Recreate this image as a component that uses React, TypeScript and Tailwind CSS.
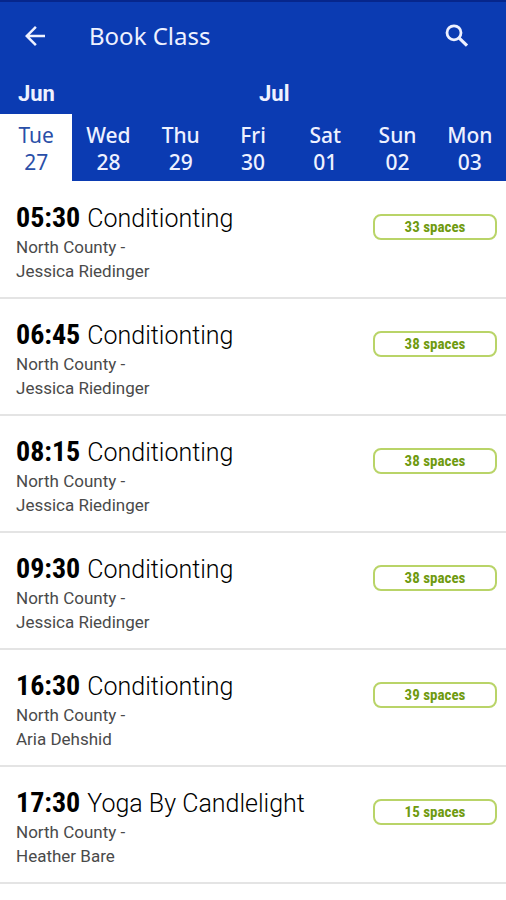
import { useState } from 'react';
import { MdArrowBack } from 'react-icons/md';

interface GymClass {
    time: string;
    title: string;
    club: string;
    instructor: string;
    spaces: number;
}

const days = [
    { name: 'Tue', date: '27' },
    { name: 'Wed', date: '28' },
    { name: 'Thu', date: '29' },
    { name: 'Fri', date: '30' },
    { name: 'Sat', date: '01' },
    { name: 'Sun', date: '02' },
    { name: 'Mon', date: '03' },
];

const classes: GymClass[] = [
    { time: '05:30', title: 'Conditionting', club: 'North County', instructor: 'Jessica Riedinger', spaces: 33 },
    { time: '06:45', title: 'Conditionting', club: 'North County', instructor: 'Jessica Riedinger', spaces: 38 },
    { time: '08:15', title: 'Conditionting', club: 'North County', instructor: 'Jessica Riedinger', spaces: 38 },
    { time: '09:30', title: 'Conditionting', club: 'North County', instructor: 'Jessica Riedinger', spaces: 38 },
    { time: '16:30', title: 'Conditionting', club: 'North County', instructor: 'Aria Dehshid', spaces: 39 },
    { time: '17:30', title: 'Yoga By Candlelight', club: 'North County', instructor: 'Heather Bare', spaces: 15 },
];

function SearchIcon() {
    return (
        <svg viewBox="0 0 28 28" className="size-7" fill="none" stroke="currentColor" strokeWidth="2.8">
            <circle cx="12" cy="10.8" r="7" />
            <path d="M17 15.8L25 23.6" strokeWidth="3.2" />
        </svg>
    );
}

function Header() {
    return (
        <div className="flex items-center border-t-2 border-[#06268c] pt-3 pl-5 pr-9">
            <button type="button" aria-label="Back" className="text-[30px]">
                <MdArrowBack />
            </button>
            <h1 className="ml-[39px] flex-1 text-2xl leading-11">Book Class</h1>
            <button type="button" aria-label="Search">
                <SearchIcon />
            </button>
        </div>
    );
}

function DayPicker({ selected, onSelect }: { selected: string; onSelect: (date: string) => void }) {
    return (
        <div className="pt-5">
            <div className="grid grid-cols-[51%_1fr] font-['Roboto','Liberation_Sans',sans-serif] text-[22px] leading-8 font-bold">
                <span className="pl-[18px]">Jun</span>
                <span className="pl-px">Jul</span>
            </div>
            <div className="mt-1 grid grid-cols-7">
                {days.map((day) => (
                    <button
                        key={day.date}
                        type="button"
                        aria-pressed={day.date === selected}
                        onClick={() => onSelect(day.date)}
                        className={`pt-2 pb-[5px] text-center text-[21px] leading-[27px] ${
                            day.date === selected ? 'bg-white text-[#2a4fa8]' : 'font-medium text-[#eef1ff]'
                        }`}
                    >
                        {day.name}
                        <br />
                        {day.date}
                    </button>
                ))}
            </div>
        </div>
    );
}

function ClassRow({ item }: { item: GymClass }) {
    return (
        <li className="flex items-start justify-between border-b-2 border-[#e4e4e4] pt-5 pr-[9px] pb-3.5 pl-4">
            <div>
                <h2 className="flex items-baseline gap-[7px] text-[25px] leading-8 font-light text-black">
                    <span className="font-['Roboto_Condensed','Roboto',sans-serif] text-[28px] font-bold">{item.time}</span>
                    {item.title}
                </h2>
                <p className="text-[17px] leading-6 text-[#4a4a4a]">
                    {item.club} -<br />
                    {item.instructor}
                </p>
            </div>
            <span className="mt-3 w-[124px] rounded-lg border-2 border-[#b9d468] text-center font-['Roboto_Condensed','Roboto',sans-serif] text-[15px] leading-[22px] font-bold text-[#6f9a10]">
                {item.spaces} spaces
            </span>
        </li>
    );
}

export default function App() {
    const [selected, setSelected] = useState('27');

    return (
        <main className="min-h-screen bg-white font-['Roboto','Liberation_Sans',sans-serif]">
            <header className="bg-[#0b3bb2] font-['Noto_Sans','Open_Sans',sans-serif] text-[#eef1ff]">
                <Header />
                <DayPicker selected={selected} onSelect={setSelected} />
            </header>
            <ul className="pt-px">
                {classes.map((item) => (
                    <ClassRow key={item.time} item={item} />
                ))}
            </ul>
        </main>
    );
}
